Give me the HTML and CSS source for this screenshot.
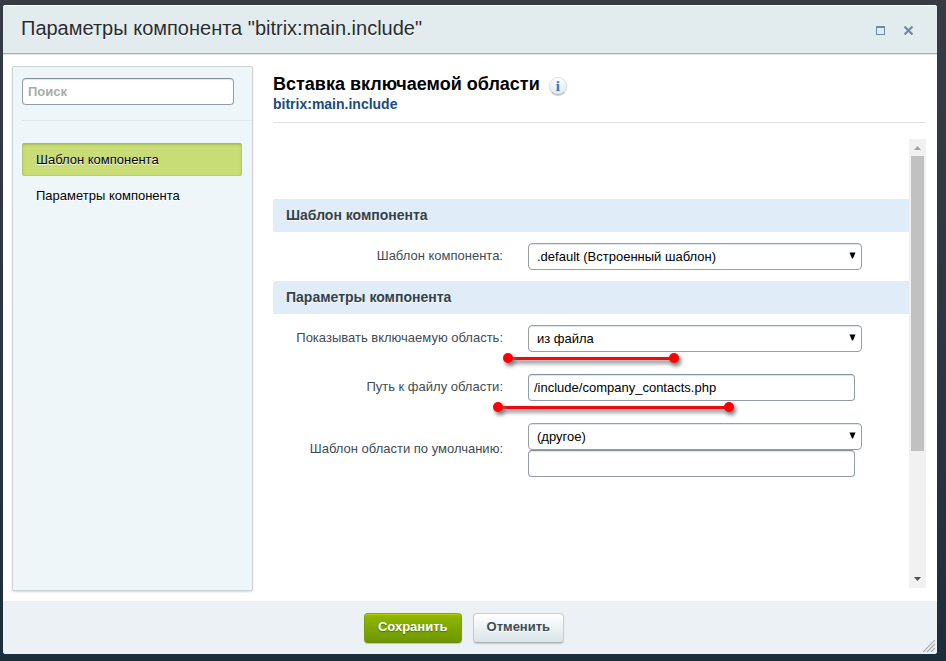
FILE: index.html
```html
<!DOCTYPE html>
<html lang="ru">
<head>
<meta charset="utf-8">
<meta name="viewport" content="width=device-width, initial-scale=1">
<title>Параметры компонента</title>
<link rel="stylesheet" href="styles.css">
</head>
<body>
<div class="dialog" role="dialog" aria-labelledby="dialog-title">
  <header class="dialog-head">
    <h1 class="dialog-title" id="dialog-title">Параметры компонента "bitrix:main.include"</h1>
    <div class="window-buttons">
      <button class="icon-button" type="button" aria-label="Развернуть">
        <svg width="9" height="9" viewBox="0 0 9 9" shape-rendering="crispEdges"><path d="M0 0h9v9H0zM1 2v6h7V2z" fill="#7488a5" fill-rule="evenodd"/></svg>
      </button>
      <button class="icon-button" type="button" aria-label="Закрыть">
        <svg width="9" height="9" viewBox="0 0 9 9"><path d="M0.500 0.500l8 8M8.500 0.500l-8 8" stroke="#7488a5" stroke-width="2.200"/></svg>
      </button>
    </div>
  </header>

  <div class="dialog-body">
    <aside class="sidebar">
      <div class="search">
        <input class="field search-field" type="search" placeholder="Поиск" aria-label="Поиск">
      </div>
      <nav class="menu">
        <a class="menu-item menu-item-active" href="#template">Шаблон компонента</a>
        <a class="menu-item" href="#params">Параметры компонента</a>
      </nav>
    </aside>

    <main class="content">
      <div class="content-head">
        <div class="heading">
          <h2 class="content-title">Вставка включаемой области</h2>
          <button class="info" type="button" aria-label="Справка">i</button>
        </div>
        <p class="component-name">bitrix:main.include</p>
      </div>

      <div class="scroll-area">
        <form class="form" id="settings">
          <h3 class="section" id="template">Шаблон компонента</h3>
          <div class="row">
            <label class="label" for="tpl">Шаблон компонента:</label>
            <div class="control">
              <div class="select-wrap">
                <select class="field select" id="tpl"><option>.default (Встроенный шаблон)</option></select>
                <svg class="arrow" width="7" height="7" viewBox="0 0 7 7"><path d="M0.500 0.500h6L4 6.500H3z"/></svg>
              </div>
            </div>
          </div>
          <h3 class="section" id="params">Параметры компонента</h3>
          <div class="row">
            <label class="label" for="area">Показывать включаемую область:</label>
            <div class="control">
              <div class="select-wrap">
                <select class="field select" id="area"><option>из файла</option></select>
                <svg class="arrow" width="7" height="7" viewBox="0 0 7 7"><path d="M0.500 0.500h6L4 6.500H3z"/></svg>
              </div>
              <span class="marker marker-short"></span>
            </div>
          </div>
          <div class="row">
            <label class="label" for="path">Путь к файлу области:</label>
            <div class="control">
              <input class="field text" id="path" type="text" value="/include/company_contacts.php">
              <span class="marker marker-long"></span>
            </div>
          </div>
          <div class="row">
            <label class="label" for="deftpl">Шаблон области по умолчанию:</label>
            <div class="control">
              <div class="select-wrap">
                <select class="field select" id="deftpl"><option>(другое)</option></select>
                <svg class="arrow" width="7" height="7" viewBox="0 0 7 7"><path d="M0.500 0.500h6L4 6.500H3z"/></svg>
              </div>
              <input class="field text" type="text" aria-label="Другой шаблон">
            </div>
          </div>
        </form>
        <div class="scrollbar" aria-hidden="true">
          <svg class="scroll-step" width="17" height="17" viewBox="0 0 17 17"><path d="M5 11l3.500-4 3.500 4z" fill="#a3a3a3"/></svg>
          <div class="track"><div class="thumb"></div></div>
          <svg class="scroll-step" width="17" height="17" viewBox="0 0 17 17"><path d="M5 6l3.500 4L12 6z" fill="#505050"/></svg>
        </div>
      </div>
    </main>
  </div>

  <footer class="dialog-foot">
    <button class="button button-save" type="submit" form="settings">Сохранить</button>
    <button class="button button-cancel" type="button">Отменить</button>
    <svg class="grip" width="12" height="12" viewBox="0 0 12 12"><path d="M0 12L12 0M4 12l8-8M8 12l4-4" stroke="#a5abae" stroke-width="1.200"/></svg>
  </footer>
</div>
</body>
</html>
```
FILE: styles.css
```css
* {
  box-sizing: border-box;
}

body {
  margin: 0;
  min-height: 100vh;
  padding: 5px 9px 7px 3px;
  display: flex;
  background: linear-gradient(#363b44, #2b3742 50%, #1c2e3b);
  color: #000;
  font: 13px/16px "Liberation Sans", Arial, sans-serif;
}

h1, h2, h3, p {
  margin: 0;
}

button, input, select {
  font: inherit;
}

.dialog {
  flex: 1;
  min-width: 0;
  display: flex;
  flex-direction: column;
  background: #fff;
  border-radius: 3px;
  overflow: hidden;
}

.dialog-head {
  height: 49px;
  padding: 0 22px 4px 18px;
  display: flex;
  align-items: center;
  justify-content: space-between;
  background: #e2ebed;
  border-top: 1px solid #fff;
  border-bottom: 1px solid #a6acae;
  box-shadow: 0 1px #e4e8e9;
}

.dialog-title {
  font-size: 20px;
  line-height: 24px;
  font-weight: normal;
  color: #282c30;
  text-shadow: 0 1px #fff;
}

.window-buttons {
  display: flex;
  gap: 15px;
  padding-top: 6px;
}

.icon-button {
  width: 13px;
  height: 13px;
  padding: 2px;
  border: 0;
  background: none;
  display: flex;
}

.dialog-body {
  flex: 1;
  display: flex;
  gap: 20px;
  padding: 12px 11px 10px 9px;
}

.sidebar {
  width: 241px;
  flex: none;
  padding: 11px 0 0 9px;
  background: #eef6fa;
  border: 1px solid #ccd3d7;
  border-radius: 2px;
  box-shadow: 0 1px 2px #d5dadd;
}

.search {
  padding-bottom: 15px;
  padding-right: 18px;
  border-bottom: 1px solid #e1e9ee;
}

.field {
  display: block;
  width: 100%;
  height: 27px;
  margin: 0;
  padding: 0 5px;
  background: #fff;
  color: #000;
  border: 1px solid #929da9;
  border-top-color: #84909d;
  border-radius: 4px;
  box-shadow: inset 0 1px 1px #dfe5e9;
  appearance: none;
  outline: 0;
}

.search-field {
  font-weight: bold;
}

.search-field::placeholder {
  color: #a7aea8;
  opacity: 1;
}

.menu {
  padding: 22px 10px 0 0;
  display: flex;
  flex-direction: column;
  gap: 3px;
}

.menu-item {
  height: 33px;
  padding: 0 13px;
  border: 1px solid transparent;
  border-radius: 2px;
  line-height: 31px;
  color: #000;
  text-decoration: none;
  text-shadow: 0 1px #fff;
}

.menu-item-active {
  background: #c8dd75;
  border-color: #a5bd5c #b5ca68 #b8cc6d;
  box-shadow: inset 0 1px 2px #a9bf5c;
}

.content {
  flex: 1;
  min-width: 0;
  display: flex;
  flex-direction: column;
}

.content-head {
  padding: 7px 0 10px;
  border-bottom: 1px solid #e0e2e3;
}

.heading {
  display: flex;
  align-items: center;
  gap: 9px;
  height: 23px;
  padding-bottom: 1px;
}

.content-title {
  font-size: 18px;
  line-height: 20px;
  white-space: nowrap;
}

.info {
  width: 18px;
  height: 18px;
  margin-top: 4px;
  padding: 0;
  border: 1px solid #dcdfe2;
  border-bottom-color: #b5babf;
  border-radius: 50%;
  background: linear-gradient(#fff, #e3e6ea);
  box-shadow: 0 1px 1px #c3c7cb;
  color: #2f78b8;
  font: bold 15px/16px "Liberation Serif", serif;
}

.component-name {
  font-size: 14px;
  line-height: 16px;
  font-weight: bold;
  color: #1b4b7d;
}

.scroll-area {
  flex: 1;
  display: flex;
  margin: 16px 0 3px;
}

.form {
  flex: 1;
  min-width: 0;
  padding-top: 60px;
}

.section {
  padding: 0 13px;
  font-size: 14px;
  line-height: 33px;
  background: #e0edf8;
  border-radius: 2px 0 0 2px;
  color: #32404b;
  text-shadow: 0 1px #fff;
}

.row {
  display: grid;
  grid-template-columns: 230px minmax(0, 334px);
  column-gap: 25px;
  align-items: center;
  padding: 11px 0;
}

.label {
  padding-bottom: 2px;
  text-align: right;
  color: #3f4b54;
}

.control {
  position: relative;
}

.select-wrap {
  position: relative;
}

.select {
  padding: 0 24px 0 8px;
  border-color: #999fa2;
}

.arrow {
  position: absolute;
  top: 9px;
  right: 6px;
  pointer-events: none;
}

.text {
  width: calc(100% - 7px);
}

.marker {
  position: absolute;
  top: 32px;
  height: 3px;
  background: #ee0a10;
  box-shadow: 2px 3px 4px #666;
  z-index: 1;
}

.marker-short {
  left: -20px;
  width: 166px;
}

.marker-long {
  left: -30px;
  width: 231px;
}

.marker::before,
.marker::after {
  content: "";
  position: absolute;
  top: -4px;
  width: 10px;
  height: 10px;
  border-radius: 50%;
  background: #f00;
  box-shadow: 2px 3px 4px #777;
}

.marker::before {
  left: -5px;
}

.marker::after {
  right: -5px;
}

.scrollbar {
  width: 17px;
  display: flex;
  flex-direction: column;
  background: #f1f1f1;
}

.scroll-step {
  flex: none;
}

.track {
  flex: 1;
  padding: 0 2px;
}

.thumb {
  height: 71%;
  background: #c1c1c1;
}

.dialog-foot {
  position: relative;
  height: 53px;
  display: flex;
  justify-content: center;
  gap: 11px;
  padding: 12px 12px 0 0;
  background: #ebf1f4;
}

.button {
  height: 30px;
  padding: 0 13px 2px;
  border: 1px solid #c5cdd1;
  border-radius: 4px;
  font-size: 13px;
  font-weight: bold;
}

.button-save {
  color: #fff;
  background: linear-gradient(#92b800, #6d9700);
  border-color: #86a900 #7c9f0c #68890f;
  box-shadow: inset 0 1px #b5d000, 0 1px 1px #bcc5c5;
  text-shadow: 0 1px 1px #4f7000;
}

.button-cancel {
  color: #3f4b54;
  background: linear-gradient(#fff, #dae4e8);
  border-bottom-color: #a9b3b7;
  box-shadow: 0 1px 1px #c5ccd0;
  text-shadow: 0 1px #fff;
}

.grip {
  position: absolute;
  right: 2px;
  bottom: 2px;
}
```
